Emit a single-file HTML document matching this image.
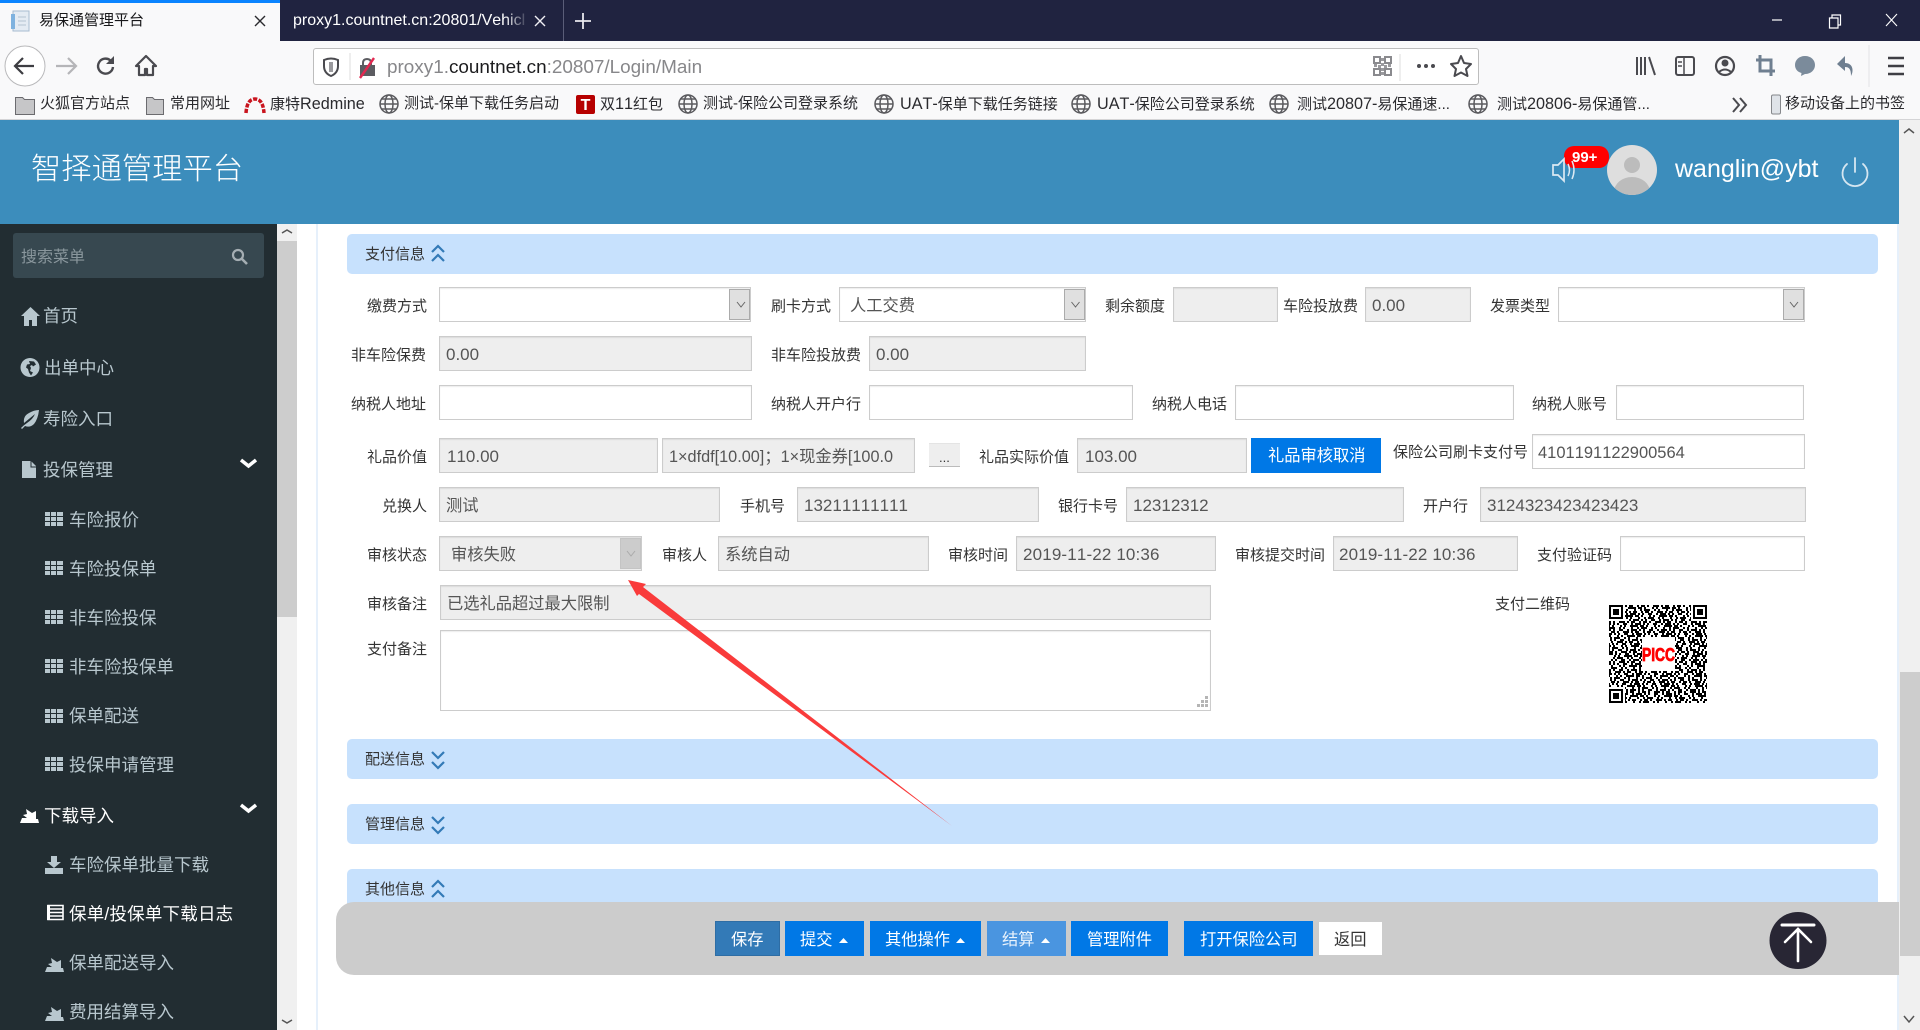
<!DOCTYPE html>
<html lang="zh-CN">
<head>
<meta charset="utf-8">
<title>智择通管理平台</title>
<style>
html,body{margin:0;padding:0;background:#fff}
body{position:relative;width:1920px;height:1030px;overflow:hidden;font-family:"Liberation Sans","Noto Sans CJK SC",sans-serif;font-kerning:none}
div{position:absolute;box-sizing:border-box}
.t{line-height:0;height:0;white-space:nowrap;color:#333;font-size:15px;transform:translateY(1px)}
.m{font-size:17.5px;color:#b8c7ce}
.w{color:#fff}
.bk{font-size:15px;color:#2a2a2e}
.bk span{font-size:16.2px}
.v{font-size:16.25px;color:#555;transform:translateY(2px)}
.n{font-size:17px;color:#555;transform:translateY(2px)}
.b{background:#fff;border:1px solid #ccc;box-shadow:inset 0 1px 1px rgba(0,0,0,.075)}
.d{background:#eee;border:1px solid #ccc;box-shadow:inset 0 1px 1px rgba(0,0,0,.075)}
.a{background:#e0e0e0;border:1px solid #ababab;top:1px;bottom:1px;right:0;width:21px}
.bar{left:347px;width:1531px;height:40px;background:#c7e1fd;border-radius:5px}
.btn{top:921px;height:35px;background:#0078e6}
.bt{font-size:16.25px;color:#fff}
</style>
</head>
<body>
<!-- browser chrome -->
<div style="left:0;top:0;width:1920px;height:41px;background:#202340"></div>
<div style="left:0;top:0;width:280px;height:41px;background:#f9f9fa"></div>
<div style="left:0;top:0;width:280px;height:3px;background:#0a84ff"></div>
<div style="left:563px;top:0;width:1px;height:41px;background:#5a5d78"></div>
<div class="t" style="left:39px;top:20px;color:#18181a">易保通管理平台</div>
<div class="t w" style="left:293px;top:20px;width:234px;overflow:visible;clip-path:inset(-12px 0 -12px 0);font-size:16px">proxy1.countnet.cn:20801/Vehicl</div>
<div style="left:505px;top:8px;width:24px;height:26px;background:linear-gradient(90deg,rgba(32,35,64,0),#202340)"></div>
<div style="left:0;top:41px;width:1920px;height:78px;background:#f9f9fa"></div>
<div style="left:0;top:119px;width:1920px;height:1px;background:#d4d4d6"></div>
<div style="left:313px;top:48px;width:1166px;height:37px;background:#fff;border:1px solid #bdbdbd;border-radius:3px"></div>
<div class="t" style="left:387px;top:67px;font-size:18.9px;color:#87878a">proxy1.<span style="color:#1c1c1e">countnet.cn</span>:20807/Login/Main</div>

<!-- bookmarks -->
<div class="t bk" style="left:40px;top:103px">火狐官方站点</div>
<div class="t bk" style="left:170px;top:103px">常用网址</div>
<div class="t bk" style="left:270px;top:103px">康特<span>Redmine</span></div>
<div class="t bk" style="left:404px;top:103px">测试-保单下载任务启动</div>
<div class="t bk" style="left:600px;top:103px">双<span>11</span>红包</div>
<div class="t bk" style="left:703px;top:103px">测试-保险公司登录系统</div>
<div class="t bk" style="left:900px;top:103px"><span>UAT-</span>保单下载任务链接</div>
<div class="t bk" style="left:1097px;top:103px"><span>UAT-</span>保险公司登录系统</div>
<div class="t bk" style="left:1297px;top:103px">测试<span>20807-</span>易保通速...</div>
<div class="t bk" style="left:1497px;top:103px">测试<span>20806-</span>易保通管...</div>
<div class="t bk" style="left:1785px;top:103px">移动设备上的书签</div>

<!-- header -->
<div style="left:0;top:120px;width:1899px;height:104px;background:#3c8dbc"></div>
<div class="t w" style="left:31px;top:169px;font-size:30.3px;font-weight:300">智择通管理平台</div>
<div style="left:1564px;top:146px;width:45px;height:22px;background:#f00;border-radius:10px"></div>
<div class="t w" style="left:1572px;top:157px;font-size:15px;font-weight:bold">99+</div>
<div class="t w" style="left:1675px;top:168px;font-size:25px">wanglin@ybt</div>

<!-- sidebar -->
<div style="left:0;top:224px;width:277px;height:806px;background:#222d32"></div>
<div style="left:13px;top:233px;width:251px;height:45px;background:#374850;border-radius:3px"></div>
<div class="t" style="left:21px;top:257px;font-size:16px;color:#8a979d">搜索菜单</div>
<div class="t m" style="left:43px;top:315px">首页</div>
<div class="t m" style="left:44px;top:367px">出单中心</div>
<div class="t m" style="left:43px;top:418px">寿险入口</div>
<div class="t m" style="left:43px;top:469px">投保管理</div>
<div class="t m" style="left:69px;top:519px">车险报价</div>
<div class="t m" style="left:69px;top:568px">车险投保单</div>
<div class="t m" style="left:69px;top:617px">非车险投保</div>
<div class="t m" style="left:69px;top:666px">非车险投保单</div>
<div class="t m" style="left:69px;top:715px">保单配送</div>
<div class="t m" style="left:69px;top:764px">投保申请管理</div>
<div class="t m w" style="left:44px;top:815px;color:#fff">下载导入</div>
<div class="t m" style="left:69px;top:864px">车险保单批量下载</div>
<div class="t m" style="left:69px;top:913px;color:#fff;letter-spacing:.2px">保单/投保单下载日志</div>
<div class="t m" style="left:69px;top:962px">保单配送导入</div>
<div class="t m" style="left:69px;top:1011px">费用结算导入</div>

<!-- sidebar scrollbar -->
<div style="left:277px;top:224px;width:20px;height:806px;background:#f0f0f0"></div>
<div style="left:277px;top:241px;width:20px;height:376px;background:#cdcdcd"></div>
<div style="left:316px;top:224px;width:2px;height:806px;background:#e6f0fb"></div>
<div style="left:1897px;top:224px;width:2px;height:806px;background:#e6f0fb"></div>
<!-- page scrollbar -->
<div style="left:1899px;top:120px;width:21px;height:910px;background:#f0f0f0"></div>
<div style="left:1900px;top:672px;width:20px;height:284px;background:#cdcdcd"></div>

<!-- section bars -->
<div class="bar" style="top:234px"></div>
<div class="bar" style="top:739px"></div>
<div class="bar" style="top:804px"></div>
<div class="bar" style="top:869px;height:60px"></div>
<div class="t" style="left:365px;top:254px">支付信息</div>
<div class="t" style="left:365px;top:759px">配送信息</div>
<div class="t" style="left:365px;top:824px">管理信息</div>
<div class="t" style="left:365px;top:889px">其他信息</div>

<!-- row 1 -->
<div class="t" style="left:367px;top:306px">缴费方式</div>
<div class="b" style="left:439px;top:287px;width:312px;height:35px"><div class="a"></div></div>
<div class="t" style="left:771px;top:306px">刷卡方式</div>
<div class="b" style="left:839px;top:287px;width:247px;height:35px"><div class="a"></div></div>
<div class="t v" style="left:850px;top:304px">人工交费</div>
<div class="t" style="left:1105px;top:306px">剩余额度</div>
<div class="d" style="left:1173px;top:287px;width:105px;height:35px"></div>
<div class="t" style="left:1283px;top:306px">车险投放费</div>
<div class="d" style="left:1365px;top:287px;width:106px;height:35px"></div>
<div class="t n" style="left:1372px;top:304px">0.00</div>
<div class="t" style="left:1490px;top:306px">发票类型</div>
<div class="b" style="left:1558px;top:287px;width:247px;height:35px"><div class="a"></div></div>
<!-- row 2 -->
<div class="t" style="left:351px;top:355px">非车险保费</div>
<div class="d" style="left:439px;top:336px;width:313px;height:35px"></div>
<div class="t n" style="left:446px;top:353px">0.00</div>
<div class="t" style="left:771px;top:355px">非车险投放费</div>
<div class="d" style="left:869px;top:336px;width:217px;height:35px"></div>
<div class="t n" style="left:876px;top:353px">0.00</div>
<!-- row 3 -->
<div class="t" style="left:351px;top:404px">纳税人地址</div>
<div class="b" style="left:439px;top:385px;width:313px;height:35px"></div>
<div class="t" style="left:771px;top:404px">纳税人开户行</div>
<div class="b" style="left:869px;top:385px;width:264px;height:35px"></div>
<div class="t" style="left:1152px;top:404px">纳税人电话</div>
<div class="b" style="left:1235px;top:385px;width:279px;height:35px"></div>
<div class="t" style="left:1532px;top:404px">纳税人账号</div>
<div class="b" style="left:1616px;top:385px;width:188px;height:35px"></div>
<!-- row 4 -->
<div class="t" style="left:367px;top:457px">礼品价值</div>
<div class="d" style="left:439px;top:438px;width:219px;height:35px"></div>
<div class="t n" style="left:447px;top:455px">110.00</div>
<div class="d" style="left:662px;top:438px;width:253px;height:35px;overflow:hidden"></div>
<div class="t v" style="left:669px;top:455px;width:240px;clip-path:inset(-14px 0 -14px 0)">1×dfdf[10.00]；1×现金券[100.0</div>
<div style="left:929px;top:443px;width:31px;height:24px;background:#eee;border-bottom:1px solid #bbb;border-top:1px solid #e4e4e4"></div>
<div class="t" style="left:939px;top:457px;font-size:13px;color:#333">...</div>
<div class="t" style="left:979px;top:457px">礼品实际价值</div>
<div class="d" style="left:1077px;top:438px;width:170px;height:35px"></div>
<div class="t n" style="left:1085px;top:455px">103.00</div>
<div style="left:1251px;top:438px;width:130px;height:35px;background:#0078e6"></div>
<div class="t bt" style="left:1268px;top:455px">礼品审核取消</div>
<div class="t" style="left:1393px;top:452px">保险公司刷卡支付号</div>
<div class="b" style="left:1532px;top:434px;width:273px;height:35px"></div>
<div class="t n" style="left:1538px;top:451px;font-size:16.5px">4101191122900564</div>
<!-- row 5 -->
<div class="t" style="left:382px;top:506px">兑换人</div>
<div class="d" style="left:439px;top:487px;width:281px;height:35px"></div>
<div class="t v" style="left:446px;top:504px">测试</div>
<div class="t" style="left:740px;top:506px">手机号</div>
<div class="d" style="left:797px;top:487px;width:242px;height:35px"></div>
<div class="t n" style="left:804px;top:504px">13211111111</div>
<div class="t" style="left:1058px;top:506px">银行卡号</div>
<div class="d" style="left:1126px;top:487px;width:278px;height:35px"></div>
<div class="t n" style="left:1133px;top:504px">12312312</div>
<div class="t" style="left:1423px;top:506px">开户行</div>
<div class="d" style="left:1480px;top:487px;width:326px;height:35px"></div>
<div class="t n" style="left:1487px;top:504px">3124323423423423</div>
<!-- row 6 -->
<div class="t" style="left:367px;top:555px">审核状态</div>
<div class="d" style="left:439px;top:536px;width:203px;height:35px"><div class="a" style="background:#ccc;border-color:#c4c4c4"></div></div>
<div class="t v" style="left:451px;top:553px">审核失败</div>
<div class="t" style="left:662px;top:555px">审核人</div>
<div class="d" style="left:718px;top:536px;width:211px;height:35px"></div>
<div class="t v" style="left:725px;top:553px">系统自动</div>
<div class="t" style="left:948px;top:555px">审核时间</div>
<div class="d" style="left:1016px;top:536px;width:200px;height:35px"></div>
<div class="t n" style="left:1023px;top:553px;letter-spacing:.15px">2019-11-22 10:36</div>
<div class="t" style="left:1235px;top:555px">审核提交时间</div>
<div class="d" style="left:1333px;top:536px;width:185px;height:35px"></div>
<div class="t n" style="left:1339px;top:553px;letter-spacing:.15px">2019-11-22 10:36</div>
<div class="t" style="left:1537px;top:555px">支付验证码</div>
<div class="b" style="left:1620px;top:536px;width:185px;height:35px"></div>
<!-- row 7 -->
<div class="t" style="left:367px;top:604px">审核备注</div>
<div class="d" style="left:440px;top:585px;width:771px;height:35px"></div>
<div class="t v" style="left:447px;top:602px">已选礼品超过最大限制</div>
<div class="t" style="left:367px;top:649px">支付备注</div>
<div class="b" style="left:440px;top:630px;width:771px;height:81px"></div>
<div class="t" style="left:1495px;top:604px">支付二维码</div>

<!-- footer -->
<div style="left:336px;top:902px;width:1563px;height:73px;background:#ccc;border-radius:18px 0 0 18px"></div>
<div style="left:715px;top:921px;width:65px;height:35px;background:#337ab7;border:1px solid #2e6da4"></div>
<div class="btn" style="left:785px;width:79px"></div>
<div class="btn" style="left:870px;width:111px"></div>
<div class="btn" style="left:987px;width:79px;background:#4a95e0"></div>
<div class="btn" style="left:1071px;width:97px"></div>
<div class="btn" style="left:1184px;width:129px"></div>
<div style="left:1319px;top:922px;width:63px;height:33px;background:#fff"></div>
<div class="t bt" style="left:731px;top:939px">保存</div>
<div class="t bt" style="left:800px;top:939px">提交</div>
<div class="t bt" style="left:885px;top:939px">其他操作</div>
<div class="t bt" style="left:1002px;top:939px;color:#eaf3fc">结算</div>
<div class="t bt" style="left:1087px;top:939px">管理附件</div>
<div class="t bt" style="left:1200px;top:939px">打开保险公司</div>
<div class="t bt" style="left:1334px;top:939px;color:#333">返回</div>

<!-- icons overlay -->
<svg width="1920" height="1030" viewBox="0 0 1920 1030" style="position:absolute;left:0;top:0" fill="none">
<!-- tabs -->
<rect x="13" y="11" width="16" height="20" fill="#e4ebf3" stroke="#a8bcd0"/><rect x="11" y="14" width="4" height="15" fill="#7fb2df"/><path d="M18 17h8M18 21h8M18 25h8" stroke="#b5c3d0"/>
<path d="M255 16l10 10M265 16l-10 10" stroke="#2a2a2e" stroke-width="1.4"/>
<path d="M535 16l10 10M545 16l-10 10" stroke="#f0f0f4" stroke-width="1.4"/>
<path d="M583 13v16M575 21h16" stroke="#e8e8ee" stroke-width="1.8"/>
<!-- window controls -->
<path d="M1772 20h10" stroke="#fff" stroke-width="1.2"/>
<path d="M1829.5 18h8.500v10h-8.500zM1832 18v-3h8.500v10h-2.500" stroke="#fff" stroke-width="1.2"/>
<path d="M1886 14l11 12M1897 14l-11 12" stroke="#fff" stroke-width="1.1"/>
<!-- nav -->
<circle cx="25" cy="66" r="20" fill="#fff" stroke="#b9b9bb"/>
<path d="M34 66H15M23 58l-8 8 8 8" stroke="#3d3d42" stroke-width="2.200"/>
<path d="M56 66h20M68 58l8 8-8 8" stroke="#b5b5b8" stroke-width="2.200"/>
<path d="M113 67a7.500 7.500 0 1 1-2.500-6.500" stroke="#4a4a4f" stroke-width="2.400"/><path d="M114 56v8h-8z" fill="#4a4a4f"/>
<path d="M146 56l-10 10h3v9h6v-6h2v6h6v-9h3z" stroke="#4a4a4f" stroke-width="2.200" stroke-linejoin="round"/>
<path d="M324 60q7-3 14 0v6q0 7-7 10q-7-3-7-10z" stroke="#4a4a4f" stroke-width="2"/><path d="M331 62v10" stroke="#9a9a9e" stroke-width="4"/>
<path d="M350 53v27" stroke="#dcdcde"/>
<rect x="360" y="65" width="15" height="11" fill="#5c5c61"/><path d="M363 65v-2q0-4 4-4t4 4v2" stroke="#5c5c61" stroke-width="2"/><path d="M360 78l14-20" stroke="#e22850" stroke-width="2.400"/>
<!-- qr icon -->
<g fill="#9a9a9e"><path d="M1374 57h6v6h-6zM1385 57h6v6h-6zM1374 69h6v6h-6zM1385 69h6v6h-6z" stroke="#8a8a8e" fill="none" stroke-width="2"/><path d="M1381 58h3v3h-3zM1381 63h3v3h-3zM1374 64h3v3h-3zM1378 65h3v3h-3zM1384 65h3v3h-3zM1388 64h3v3h-3zM1381 68h3v3h-3zM1381 72h3v3h-3z"/></g>
<path d="M1400 54v27" stroke="#dcdcde"/>
<g fill="#4a4a4f"><circle cx="1419" cy="66" r="2"/><circle cx="1426" cy="66" r="2"/><circle cx="1433" cy="66" r="2"/></g>
<path d="M1461 56l3 7 7 1-5 5 1.500 7-6.500-3.500-6.500 3.500 1.500-7-5-5 7-1z" stroke="#4a4a4f" stroke-width="2" stroke-linejoin="round"/>
<!-- toolbar right -->
<path d="M1637 57v18M1641 57v18M1645 57v18M1649 57l6 18" stroke="#4a4a4f" stroke-width="2"/>
<rect x="1676" y="57" width="18" height="18" rx="2" stroke="#4a4a4f" stroke-width="2"/><path d="M1684 57v18M1678 62h4M1678 66h4" stroke="#4a4a4f" stroke-width="1.500"/>
<circle cx="1725" cy="66" r="9" stroke="#4a4a4f" stroke-width="2.200"/><circle cx="1725" cy="63" r="3.500" fill="#4a4a4f"/><path d="M1719 72q6-5 12 0" stroke="#4a4a4f" stroke-width="2"/>
<path d="M1760 55v16h15M1756 60h15v16" stroke="#6f7f90" stroke-width="3"/>
<path d="M1805 56c6 0 10 4 10 9s-4 9-10 9l-4 2 .500-3c-4-1-6.500-4-6.500-8 0-5 4-9 10-9z" fill="#7b8b9b"/>
<path d="M1845 56l-8 8 8 7v-4c4 0 6 2 6 9 3-5 2-13-6-13z" fill="#6f7f90"/>
<path d="M1869 45v42" stroke="#e4e4e6"/>
<path d="M1888 58h16M1888 66h16M1888 74h16" stroke="#3f3f44" stroke-width="2.500"/>
<!-- bookmark icons -->
<g fill="#c6c6c8" stroke="#6b6b6f"><path d="M15.500 97.500h7l2 2h10v15h-19z"/><path d="M146.500 97.500h6l2 2h9v15h-17z"/></g>
<path d="M246 113q1-14 9-14t9 14" stroke="#c9141e" stroke-width="3.500" stroke-dasharray="4 1.500"/>
<rect x="576" y="95" width="19" height="19" rx="2" fill="#b60000"/><text x="585.500" y="110" fill="#fff" font-family="Liberation Sans" font-size="16" font-weight="bold" text-anchor="middle">T</text>
<g stroke="#5a5a5e" stroke-width="1.500">
<g><circle cx="389" cy="104" r="9"/><ellipse cx="389" cy="104" rx="4" ry="9"/><path d="M380 104h18M381 99h16M381 109h16"/></g>
<g><circle cx="688" cy="104" r="9"/><ellipse cx="688" cy="104" rx="4" ry="9"/><path d="M679 104h18M680 99h16M680 109h16"/></g>
<g><circle cx="884" cy="104" r="9"/><ellipse cx="884" cy="104" rx="4" ry="9"/><path d="M875 104h18M876 99h16M876 109h16"/></g>
<g><circle cx="1081" cy="104" r="9"/><ellipse cx="1081" cy="104" rx="4" ry="9"/><path d="M1072 104h18M1073 99h16M1073 109h16"/></g>
<g><circle cx="1279" cy="104" r="9"/><ellipse cx="1279" cy="104" rx="4" ry="9"/><path d="M1270 104h18M1271 99h16M1271 109h16"/></g>
<g><circle cx="1478" cy="104" r="9"/><ellipse cx="1478" cy="104" rx="4" ry="9"/><path d="M1469 104h18M1470 99h16M1470 109h16"/></g>
</g>
<path d="M1733 98l6 7-6 7M1740 98l6 7-6 7" stroke="#4a4a4f" stroke-width="2"/>
<rect x="1771.500" y="95" width="9" height="19" rx="1.500" fill="#dfe3e8" stroke="#85878b"/>
<!-- header icons -->
<path d="M1553 165h5l6-6v22l-6-6h-5z" stroke="#dbe9f3" stroke-width="1.700"/><path d="M1568 164q3 6 0 12M1572 161q4 9 0 18" stroke="#dbe9f3" stroke-width="1.500"/>
<circle cx="1632" cy="170" r="25" fill="#dedede"/>
<clipPath id="av"><circle cx="1632" cy="170" r="25"/></clipPath>
<g clip-path="url(#av)" fill="#bcbcbc"><ellipse cx="1632" cy="165" rx="8" ry="8"/><ellipse cx="1632" cy="192" rx="18" ry="15"/></g>
<path d="M1847 164a12.500 12.500 0 1 0 16 0M1855 158v14" stroke="#d5e6f1" stroke-width="1.800" stroke-linecap="round"/>
<!-- sidebar icons -->
<g fill="#b8c7ce">
<path d="M30.500 307l-9.500 9h3v10h5v-6h3v6h5v-10h3z"/>
<path fill-rule="evenodd" d="M30 358a9.500 9.500 0 1 0 .01 0zM29 361l5 .5 2 3-3 2-1-1.500-2 1 1 2-1 3 3 1.500-2 3-2-3-1-3.500-2-1.500 1-3 3-.5z"/>
<path d="M21 428q3-3 6-5q6-4 8-9l-11 9q-1-7 5-10 5-3 10-3-1 9-5 14-4 4-9 2l-3 3z"/>
<path d="M22 461h9l5 5v12H22z"/>
<path fill="#fff" d="M20 823l2-5h5l-4-3 4-1-1-5 6 4 4-2v8l2 0 1 4zM29 815l4-1v4h-4z"/>
</g>
<path d="M31 461v6h5" stroke="#222d32" stroke-width="1"/>
<g fill="#b8c7ce">
<path d="M45 512h5v4h-5zM51 512h5v4h-5zM57 512h6v4h-6zM45 517h5v4h-5zM51 517h5v4h-5zM57 517h6v4h-6zM45 522h5v4h-5zM51 522h5v4h-5zM57 522h6v4h-6z"/>
<path d="M45 561h5v4h-5zM51 561h5v4h-5zM57 561h6v4h-6zM45 566h5v4h-5zM51 566h5v4h-5zM57 566h6v4h-6zM45 571h5v4h-5zM51 571h5v4h-5zM57 571h6v4h-6z"/>
<path d="M45 610h5v4h-5zM51 610h5v4h-5zM57 610h6v4h-6zM45 615h5v4h-5zM51 615h5v4h-5zM57 615h6v4h-6zM45 620h5v4h-5zM51 620h5v4h-5zM57 620h6v4h-6z"/>
<path d="M45 659h5v4h-5zM51 659h5v4h-5zM57 659h6v4h-6zM45 664h5v4h-5zM51 664h5v4h-5zM57 664h6v4h-6zM45 669h5v4h-5zM51 669h5v4h-5zM57 669h6v4h-6z"/>
<path d="M45 709h5v4h-5zM51 709h5v4h-5zM57 709h6v4h-6zM45 714h5v4h-5zM51 714h5v4h-5zM57 714h6v4h-6zM45 719h5v4h-5zM51 719h5v4h-5zM57 719h6v4h-6z"/>
<path d="M45 757h5v4h-5zM51 757h5v4h-5zM57 757h6v4h-6zM45 762h5v4h-5zM51 762h5v4h-5zM57 762h6v4h-6zM45 767h5v4h-5zM51 767h5v4h-5zM57 767h6v4h-6z"/>
<path d="M45 868h18v6H45zM51 856h6v6h4l-7 6-7-6h4z"/>
<path d="M45 972l2-5h5l-4-3 4-1-1-5 6 4 4-2v8h2l1 4zM45 1021l2-5h5l-4-3 4-1-1-5 6 4 4-2v8h2l1 4z"/>
</g>
<path d="M48 905.500h15v14H48zM48 909h15M48 912.500h15M48 916h15" stroke="#fff" stroke-width="1.600"/><path d="M47 905h3v15h-3z" fill="#fff"/>
<path d="M241 460l7.500 6 7.500-6" stroke="#fff" stroke-width="3.500"/><path d="M241 805l7.500 6 7.500-6" stroke="#fff" stroke-width="3.500"/>
<circle cx="238" cy="255" r="5" stroke="#a5aeb3" stroke-width="2.200"/><path d="M242 259l5 5" stroke="#a5aeb3" stroke-width="2.600"/>
<!-- scrollbar arrows -->
<path d="M282 233l5-3 5 3M282 1020l5 3 5-3" stroke="#555" stroke-width="1.500"/>
<path d="M1904 133l5-4 5 4M1904 1016l5 6 5-6" stroke="#555" stroke-width="1.500"/>
<!-- section chevrons -->
<g stroke="#337ab7" stroke-width="2.200">
<path d="M432 252l6-6 6 6M432 261l6-6 6 6"/>
<path d="M432 752l6 6 6-6M432 762l6 6 6-6"/>
<path d="M432 817l6 6 6-6M432 827l6 6 6-6"/>
<path d="M432 887l6-6 6 6M432 897l6-6 6 6"/>
</g>
<!-- select arrows -->
<g stroke="#666" stroke-width="1"><path d="M737 302l4 5 4-5M1071.500 302l4 5 4-5M1790 302l4 5 4-5"/></g>
<path d="M627 551l4 5 4-5" stroke="#aaa"/>
<!-- resize grip -->
<g fill="#b5b5b5"><path d="M1205 696h3v3h-3zM1201 700h3v3h-3zM1205 700h3v3h-3zM1197 704h3v3h-3zM1201 704h3v3h-3zM1205 704h3v3h-3z"/></g>
<!-- QR -->
<clipPath id="qc"><rect x="1609" y="605" width="98" height="98"/></clipPath>
<g clip-path="url(#qc)" stroke="#000" stroke-width="2">
<path stroke-dasharray="2 2 4 2 2 4 6 2 2 2 4 4" d="M1601 606H1720M1605 612H1720M1603 622H1720M1607 632H1720M1601 642H1720M1605 652H1720M1603 662H1720M1599 672H1720M1607 682H1720M1602 692H1720M1604 700H1720"/>
<path stroke-dasharray="4 2 2 6 2 2 2 4 8 2" d="M1604 608H1720M1601 616H1720M1606 626H1720M1603 636H1720M1607 646H1720M1600 656H1720M1605 666H1720M1602 676H1720M1603 686H1720M1606 696H1720"/>
<path stroke-dasharray="2 4 2 2 6 4 2 2 2 6" d="M1602 610H1720M1606 618H1720M1599 628H1720M1604 638H1720M1602 648H1720M1607 658H1720M1601 668H1720M1604 678H1720M1600 688H1720M1605 698H1720M1601 702H1720"/>
<path stroke-dasharray="6 2 2 2 2 4 4 4 2 2" d="M1600 614H1720M1603 620H1720M1605 624H1720M1601 630H1720M1606 634H1720M1602 640H1720M1604 644H1720M1600 650H1720M1607 654H1720M1603 660H1720M1605 664H1720M1601 670H1720M1606 674H1720M1602 680H1720M1604 684H1720M1600 690H1720M1606 694H1720"/>
</g>
<path d="M1609 605h16v16h-16zM1691 605h16v16h-16zM1609 687h16v16h-16z" fill="#fff"/>
<g stroke="#000" stroke-width="2" fill="#fff"><rect x="1610" y="606" width="12" height="12"/><rect x="1694" y="606" width="12" height="12"/><rect x="1610" y="690" width="12" height="12"/></g>
<path d="M1613 609h6v6h-6zM1697 609h6v6h-6zM1613 693h6v6h-6z" fill="#000"/>
<rect x="1642" y="637" width="33" height="34" fill="#fff"/>
<text x="1642" y="661" fill="#f00" stroke="#f00" stroke-width=".8" font-family="Liberation Sans" font-weight="bold" font-size="18" textLength="33" lengthAdjust="spacingAndGlyphs">PICC</text>
<!-- carets -->
<g fill="#fff"><path d="M839 943l4.500-5 4.500 5zM956 943l4.500-5 4.500 5zM1041 943l4.500-5 4.500 5z"/></g>
<!-- back to top -->
<circle cx="1798" cy="940.500" r="28.500" fill="#282634"/>
<path d="M1782 925h32" stroke="#fff" stroke-width="3" stroke-linecap="round"/>
<path d="M1798 929v32M1785 942l13-13 13 13" stroke="#fff" stroke-width="2.600" stroke-linecap="round"/>
<!-- annotation arrow -->
<polygon points="628,580 646,584 643,587 952,826 639,594 637,596" fill="#f93b3b"/>
</svg>
</body>
</html>
